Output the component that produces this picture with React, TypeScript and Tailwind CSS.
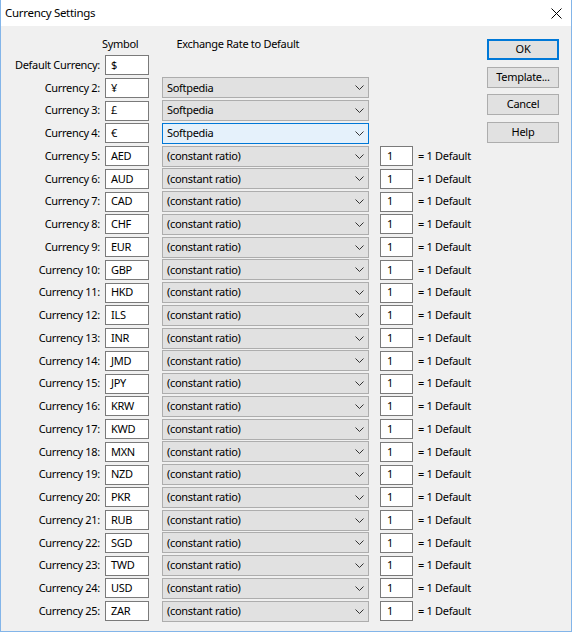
import React from "react";

const codes = [
  "AED", "AUD", "CAD", "CHF", "EUR", "GBP", "HKD", "ILS", "INR", "JMD",
  "JPY", "KRW", "KWD", "MXN", "NZD", "PKR", "RUB", "SGD", "TWD", "USD", "ZAR",
];

type Row = { label: string; symbol: string; rate?: string; focused?: boolean; ratio?: boolean };

const rows: Row[] = [
  { label: "Default Currency:", symbol: "$" },
  { label: "Currency 2:", symbol: "¥", rate: "Softpedia" },
  { label: "Currency 3:", symbol: "£", rate: "Softpedia" },
  { label: "Currency 4:", symbol: "€", rate: "Softpedia", focused: true },
  ...codes.map((c, i) => ({
    label: `Currency ${i + 5}:`,
    symbol: c,
    rate: "(constant ratio)",
    ratio: true,
  })),
];

function Chevron() {
  return (
    <svg width="9" height="5" viewBox="0 0 9 5" className="shrink-0">
      <path d="M0.5 0.5 L4.5 4.5 L8.5 0.5" fill="none" stroke="#333" strokeWidth="1" />
    </svg>
  );
}

function Button({ children, primary }: { children: React.ReactNode; primary?: boolean }) {
  return (
    <div
      className={
        "w-[72px] h-[21px] flex items-center justify-center bg-[#e1e1e1] text-black " +
        (primary ? "border-2 border-[#0078d7]" : "border border-[#adadad]")
      }
    >
      {children}
    </div>
  );
}

export default function App() {
  return (
    <div
      className="w-[572px] h-[632px] flex flex-col border-x border-b border-[#83b5e9] bg-[#f0f0f0] text-[11px] tracking-[-0.3px] text-black overflow-hidden"
      style={{ fontFamily: '"Noto Sans", "Open Sans", sans-serif' }}
    >
      {/* Title bar */}
      <div className="h-[26px] shrink-0 bg-white flex items-center justify-between pl-[4px] pr-[9px]">
        <span className="text-[11.5px]">Currency Settings</span>
        <svg width="11" height="11" viewBox="0 0 11 11">
          <path d="M0.5 0.5 L10.5 10.5 M10.5 0.5 L0.5 10.5" stroke="#000" strokeWidth="1" />
        </svg>
      </div>

      <div className="flex flex-1">
        {/* Form */}
        <div className="flex flex-col pt-[9px]">
          <div className="h-[18.625px] flex items-center">
            <span className="ml-[101px]">Symbol</span>
            <span className="ml-[38px]">Exchange Rate to Default</span>
          </div>
          {rows.map((r) => (
            <div key={r.label} className="h-[22.75px] flex items-center">
              <div className="w-[99px] text-right whitespace-nowrap">{r.label}</div>
              <div className="ml-[5px] w-[44px] h-[20px] bg-white border border-[#7a7a7a] flex items-center pl-[5px]">
                {r.symbol}
              </div>
              {r.rate && (
                <div
                  className={
                    "ml-[13px] w-[207px] h-[21px] border flex items-center justify-between pl-[4px] pr-[4px] " +
                    (r.focused ? "bg-[#e5f1fb] border-[#0078d7]" : "bg-[#e1e1e1] border-[#adadad]")
                  }
                >
                  <span>{r.rate}</span>
                  <Chevron />
                </div>
              )}
              {r.ratio && (
                <>
                  <div className="ml-[11px] w-[33px] h-[20px] bg-white border border-[#7a7a7a] flex items-center pl-[6px]">
                    1
                  </div>
                  <span className="ml-[5px] whitespace-nowrap">= 1 Default</span>
                </>
              )}
            </div>
          ))}
        </div>

        {/* Buttons */}
        <div className="ml-auto mr-[12px] mt-[13px] flex flex-col gap-[6.5px]">
          <Button primary>OK</Button>
          <Button>Template...</Button>
          <Button>Cancel</Button>
          <Button>Help</Button>
        </div>
      </div>
    </div>
  );
}
